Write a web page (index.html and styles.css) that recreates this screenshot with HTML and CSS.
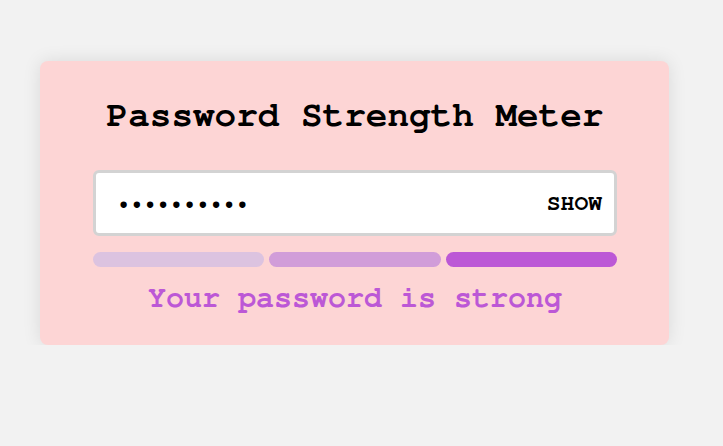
FILE: index.html
```html
<!DOCTYPE html>
<html lang="en">
<head>
<meta charset="utf-8">
<title>Password Strength Meter</title>
<link rel="stylesheet" href="styles.css">
</head>
<body>
<div class="card">
  <h1 class="title">Password Strength Meter</h1>
  <div class="field">
    <input class="pw" type="password" value="abcdefghij">
    <span class="show">SHOW</span>
  </div>
  <div class="bars">
    <span class="bar bar-1"></span>
    <span class="bar bar-2"></span>
    <span class="bar bar-3"></span>
  </div>
  <p class="status">Your password is strong</p>
</div>
</body>
</html>
```
FILE: styles.css
```css
html, body {
  margin: 0;
  padding: 0;
  background: #f2f2f2;
}
body {
  font-family: "Nimbus Mono PS", "Nimbus Mono L", "FreeMono", "Courier 10 Pitch", "Courier", "Liberation Mono", monospace;
  padding: 61px 0 0 40px;
}
.card {
  box-sizing: border-box;
  width: 629px;
  height: 284px;
  background: #fdd5d5;
  border-radius: 8px;
  box-shadow: 0 0 18px rgba(0, 0, 0, 0.1);
  padding: 33px 52px 0 53px;
}
.title {
  margin: 0;
  font-size: 36px;
  line-height: 43px;
  font-weight: bold;
  text-align: center;
  color: #000;
}
.field {
  margin-top: 33px;
  box-sizing: border-box;
  height: 66px;
  background: #fff;
  border: 3px solid #d3d3d3;
  border-radius: 6px;
  display: flex;
  align-items: center;
  padding: 0 12px 0 21px;
}
.pw {
  flex: 1;
  min-width: 0;
  border: 0;
  outline: 0;
  background: transparent;
  font-family: inherit;
  font-size: 22px;
  color: #000;
  padding: 0;
}
.show {
  font-size: 23px;
  font-weight: bold;
  color: #000;
}
.bars {
  margin-top: 16px;
  display: flex;
  gap: 5px;
}
.bar {
  flex: 1;
  height: 15px;
  border-radius: 8px;
}
.bar-1 { background: #dcc3e0; }
.bar-2 { background: #d19dd9; }
.bar-3 { background: #bc58d6; }
.status {
  margin: 13px 0 0;
  font-size: 30px;
  line-height: 36px;
  font-weight: bold;
  text-align: center;
  color: #bc58d6;
}
```
